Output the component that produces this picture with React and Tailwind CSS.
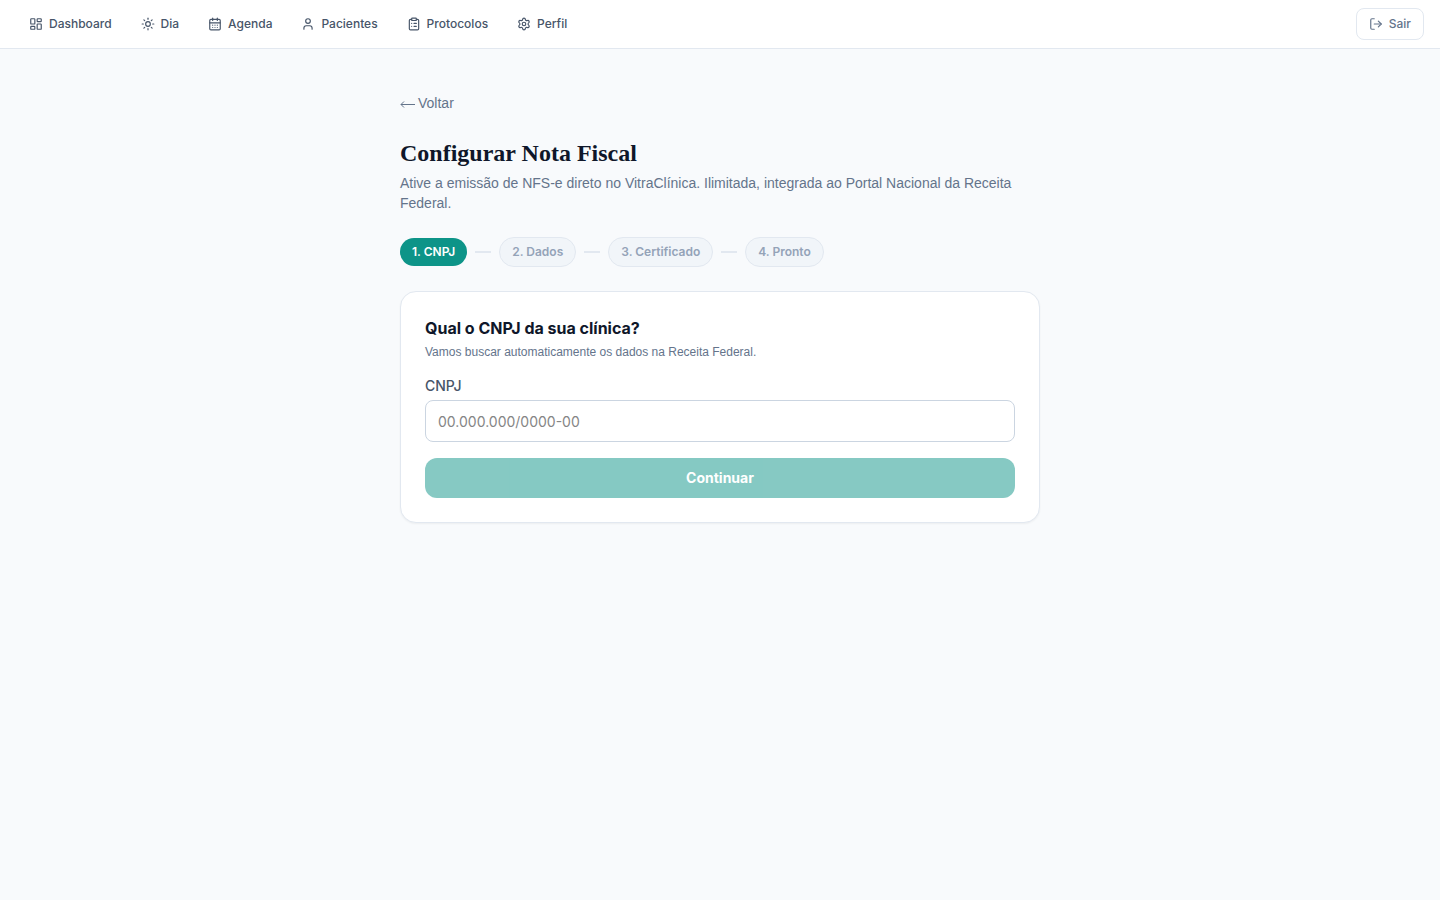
import { useState } from 'react';
import {
    CalendarDays,
    ClipboardList,
    LayoutDashboard,
    LogOut,
    Settings,
    Sun,
    User,
} from 'lucide-react';

const navItems = [
    { label: 'Dashboard', icon: LayoutDashboard },
    { label: 'Dia', icon: Sun },
    { label: 'Agenda', icon: CalendarDays },
    { label: 'Pacientes', icon: User },
    { label: 'Protocolos', icon: ClipboardList },
    { label: 'Perfil', icon: Settings },
];

const steps = ['CNPJ', 'Dados', 'Certificado', 'Pronto'];

function Header() {
    return (
        <header className="flex items-center justify-between h-[49px] px-4 bg-white border-b border-[#e2e8f0]">
            <nav className="flex items-center gap-[3px]">
                {navItems.map(({ label, icon: Icon }) => (
                    <a
                        key={label}
                        href="#"
                        className="flex items-center gap-1.5 px-3 py-1.5 rounded-lg border border-transparent text-xs font-medium text-[#475569] hover:bg-[#f1f5f9] transition-colors"
                    >
                        <Icon className="w-3.5 h-3.5" strokeWidth={2} />
                        {label}
                    </a>
                ))}
            </nav>
            <button
                type="button"
                className="flex items-center gap-1.5 h-8 px-3 rounded-lg border border-[#e2e8f0] text-xs font-medium text-[#64748b] hover:bg-[#f8fafc] transition-colors"
            >
                <LogOut className="w-3.5 h-3.5" strokeWidth={2} />
                Sair
            </button>
        </header>
    );
}

function Steps({ current }) {
    return (
        <ol className="flex items-center gap-2 mb-6 text-xs font-semibold">
            {steps.map((name, i) => (
                <li key={name} className="flex items-center gap-2">
                    {i > 0 && <span className="w-4 h-0.5 bg-[#e2e8f0]" />}
                    <span
                        className={
                            i === current
                                ? 'px-3 py-1.5 rounded-full bg-[#0d9488] text-white'
                                : 'px-3 py-1.5 rounded-full bg-[#f1f5f9] border border-[#e2e8f0] text-[#94a3b8]'
                        }
                    >
                        {i + 1}. {name}
                    </span>
                </li>
            ))}
        </ol>
    );
}

export default function App() {
    const [cnpj, setCnpj] = useState('');
    const valid = cnpj.replace(/\D/g, '').length === 14;

    return (
        <div className="min-h-screen bg-[#f8fafc] font-[Inter,sans-serif] text-[#0f172a]">
            <Header />
            <main className="max-w-2xl mx-auto px-4 py-11">
                <a
                    href="#"
                    className="flex items-center gap-[3px] w-fit mb-6 text-sm text-[#64748b] hover:text-[#334155] font-['Liberation_Sans',sans-serif]"
                >
                    <svg
                        className="w-[15px] h-3.5"
                        viewBox="0 0 15 14"
                        fill="none"
                        stroke="currentColor"
                        aria-hidden="true"
                    >
                        <path d="M15 8.5H1M4 5.5l-3 3 3 3" />
                    </svg>
                    Voltar
                </a>
                <h1 className="mb-1 text-2xl font-bold font-['Liberation_Serif',serif]">Configurar Nota Fiscal</h1>
                <p className="mb-6 text-sm text-[#64748b] font-['Liberation_Sans',sans-serif]">
                    Ative a emissão de NFS-e direto no VitraClínica. Ilimitada, integrada ao Portal Nacional da Receita
                    Federal.
                </p>

                <Steps current={0} />

                <form
                    onSubmit={(e) => e.preventDefault()}
                    className="p-6 bg-white rounded-2xl border border-[#e2e8f0] shadow-xs"
                >
                    <h2 className="mb-1 text-base font-bold">Qual o CNPJ da sua clínica?</h2>
                    <p className="mb-4 text-xs text-[#64748b] font-['Liberation_Sans',sans-serif]">
                        Vamos buscar automaticamente os dados na Receita Federal.
                    </p>
                    <label htmlFor="cnpj" className="block mb-1 text-sm font-medium text-[#475569]">
                        CNPJ
                    </label>
                    <input
                        id="cnpj"
                        type="text"
                        inputMode="numeric"
                        value={cnpj}
                        onChange={(e) => setCnpj(e.target.value)}
                        placeholder="00.000.000/0000-00"
                        className="block w-full h-[42px] px-3 mb-4 rounded-lg border border-[#cbd5e1] text-sm placeholder:text-[#858585] focus:outline-none focus:border-[#0d9488]"
                    />
                    <button
                        type="submit"
                        disabled={!valid}
                        className="w-full h-10 rounded-xl bg-[#0d9488] text-sm font-bold text-white disabled:opacity-50"
                    >
                        Continuar
                    </button>
                </form>
            </main>
        </div>
    );
}
